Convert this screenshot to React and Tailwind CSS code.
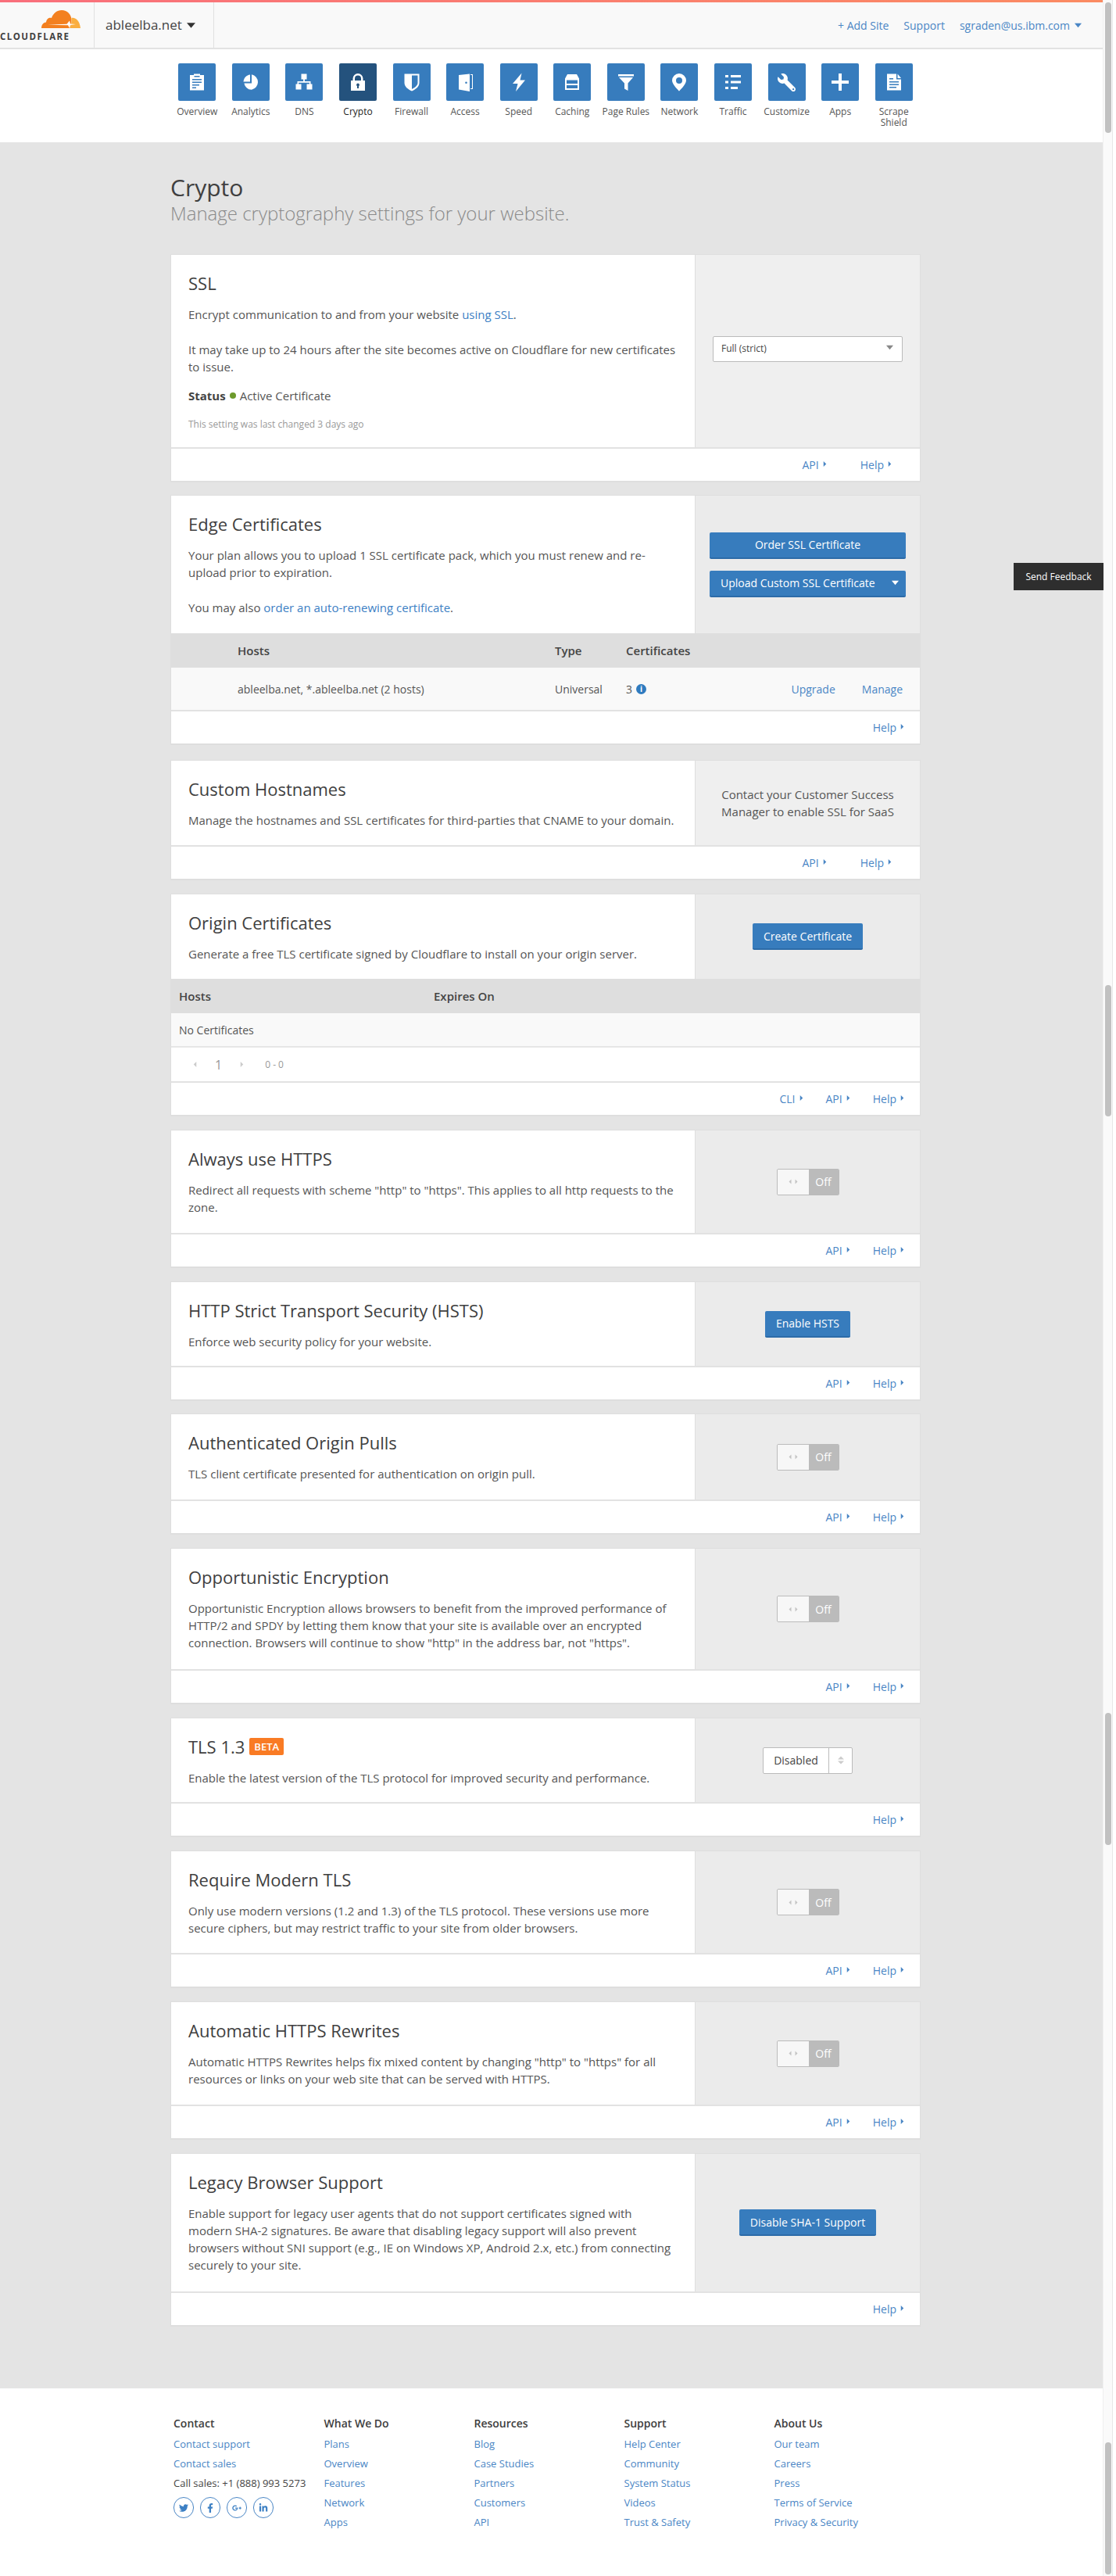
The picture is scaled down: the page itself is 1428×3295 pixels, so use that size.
import React from 'react';
import { FaWrench, FaTwitter, FaFacebookF, FaGooglePlusG, FaLinkedinIn } from 'react-icons/fa';

const Caret = ({ dir = 'right', className = '' }) => {
  const d = {
    right: 'M2 1l4 4-4 4z',
    left: 'M6 1L2 5l4 4z',
    down: 'M0 2h10L5 8z',
  }[dir];
  return (
    <svg viewBox={dir === 'down' ? '0 0 10 10' : '0 0 8 10'} className={`fill-current inline-block ${className}`}>
      <path d={d} />
    </svg>
  );
};

const Ico = ({ children }) => (
  <svg viewBox="0 0 24 24" className="w-6 h-6 fill-white" fillRule="evenodd">
    {children}
  </svg>
);

const navItems = [
  ['Overview', <Ico><path d="M3 3h5V1.5h8V3h5v19.5H3zM8.500 4v1.500h7V4zM6 8v1.600h12V8zM6 11.500v1.600h12v-1.600zM6 15v1.600h9V15zM6 18.500v1.600h5v-1.600z" /></Ico>],
  ['Analytics', <Ico><path d="M13 2.200a10 10 0 0 1 0 19.600c-5 0-8.700-3.800-9.500-8.300H13z" /><path d="M2.500 11.500C3 6.500 6.500 3 11 2.500v9z" /></Ico>],
  ['DNS', <Ico><path d="M8.500 1.500h7v7h-2.600v2.600h7.600v3.400h2v7h-7v-7h3.400v-1.800H5.100v1.800h3.400v7h-7v-7h2v-3.400h7.600V8.500H8.500z" /></Ico>],
  ['Crypto', <Ico><path d="M3 10h2.500V7.500a6.500 6.500 0 0 1 13 0V10H21v13H3zM8 10h8V7.500a4 4 0 0 0-8 0zM12 13.500a2 2 0 0 0-1 3.700V20h2v-2.800a2 2 0 0 0-1-3.700z" /></Ico>],
  ['Firewall', <Ico><path d="M2.500 1.500h19V13c0 5-5 8.500-9.500 10.500C7.500 21.500 2.500 18 2.500 13zM12 3.500V21c3.500-1.700 7.500-4.500 7.500-8V3.500z" /></Ico>],
  ['Access', <Ico><path d="M4 3l14-1.500V24L4 21.500zM13.500 11.500a1.300 1.300 0 1 0 0 2.600 1.300 1.300 0 0 0 0-2.600z" /><path d="M19 2h3v19h-3v-1h2V3h-2z" /></Ico>],
  ['Speed', <Ico><path d="M15.500.500L4 14h6.500L8 24l12-14.500h-6.500z" /></Ico>],
  ['Caching', <Ico><path d="M6 2h12l3 5.500V22H3V7.500zM5 9.500V14h14V9.500zM5 16v4h14v-4z" /></Ico>],
  ['Page Rules', <Ico><path d="M2 2h20v2.500H2zM3 6h18l-6.500 7.500V23L10 20.500v-7z" /></Ico>],
  ['Network', <Ico><path d="M12 1a9 9 0 0 0-9 9c0 5 9 13.500 9 13.500S21 15 21 10a9 9 0 0 0-9-9zM12 6a4 4 0 1 1 0 8 4 4 0 0 1 0-8z" /></Ico>],
  ['Traffic', <Ico><path d="M2 3h4v3H2zM9 3h13v3H9zM2 10.500h4v3H2zM9 10.500h13v3H9zM2 18h4v3H2zM9 18h9v3H9z" /></Ico>],
  ['Customize', <FaWrench className="w-[23px] h-[23px] text-white -scale-x-100" />],
  ['Apps', <Ico><path d="M10 1h4v9h9v4h-9v9h-4v-9H1v-4h9z" /></Ico>],
  ['Scrape Shield', <Ico><path d="M3 1.500h12v7h6v14H3zM16.500 1.500l4.500 5.500h-4.500zM6 11v1.600h12V11zM6 14.500v1.600h12v-1.600zM6 18v1.600h9V18zM6 7v1.600h5V7z" /></Ico>],
];

const Nav = () => (
  <div className="bg-white h-[119px] pt-[18px]">
    <div className="ml-[218px] w-[960px] grid grid-cols-[repeat(14,1fr)]">
      {navItems.map(([label, icon]) => {
        const active = label === 'Crypto';
        return (
          <div key={label} className="flex flex-col items-center">
            <div className={`w-12 h-12 rounded-[2px] flex items-center justify-center ${active ? 'bg-[#24527d]' : 'bg-[#377cbd]'}`}>
              {icon}
            </div>
            <div className={`mt-[7px] text-xs leading-[14px] text-center w-[66px] ${active ? 'text-[#222]' : 'text-[#555]'}`}>
              {label}
            </div>
          </div>
        );
      })}
    </div>
  </div>
);

const Logo = () => (
  <div className="w-[121px] h-full border-r border-[#e0e0e0] relative flex flex-col items-end pr-[17px] pt-[10px]">
    <svg viewBox="0 0 50 23" className="w-[50px] h-[23px] block">
      <path fill="#f38020" d="M0 23C0 19 2 16 6 15.500C6.500 11 10 9 13 10C15 4 20 0 26 0C33 0 38 5 38.500 12C38.500 15 38 19 36 23Z" />
      <path fill="#faae40" d="M36 23C38 19 39 15 38.500 10C44 9 49 14 50 23Z" />
      <path fill="#fff" d="M8 18.700L32.500 17.800L36 13.500L37 17.500L44 18L37 19L36 23L34 19.300Z" />
    </svg>
    <div className="absolute left-0 top-[38px] w-[104px] text-[11.5px] leading-[11px] font-bold text-[#404041] tracking-[1.45px] whitespace-nowrap">CLOUDFLARE</div>
  </div>
);

const Header = () => (
  <div>
    <div className="h-[3px] bg-gradient-to-r from-[#f96f7c] to-[#fb8b62]" />
    <div className="h-[60px] bg-[#f9f9f9] border-b-2 border-[#e2e2e2] flex items-center">
      <Logo />
      <div className="w-[153px] h-full border-r border-[#e0e0e0] pl-[14px] flex items-center text-[#444] text-[17px]">
        ableelba.net
        <Caret dir="down" className="w-[11px] h-[11px] ml-[6px] text-[#333]" />
      </div>
      <div className="ml-auto flex items-center pr-[27px] text-[14px] text-[#4a86c5]">
        <span>+ Add Site</span>
        <span className="ml-[19px]">Support</span>
        <span className="ml-[19px]">sgraden@us.ibm.com</span>
        <Caret dir="down" className="w-[9px] h-[9px] ml-[6px]" />
      </div>
    </div>
  </div>
);

const Btn = ({ children, className = '' }) => (
  <div className={`bg-[#377cbd] border-b-2 border-[#2c6ba8] rounded-[2px] h-[34px] flex items-center justify-center text-white text-[14px] ${className}`}>
    {children}
  </div>
);

const Toggle = () => (
  <div className="w-20 h-[34px] flex rounded-[2px] overflow-hidden border border-[#bbb]">
    <div className="w-10 bg-[#f7f7f7] flex items-center justify-center gap-[2px] text-[#c4c4c4]">
      <Caret dir="left" className="w-[6px] h-[9px]" />
      <Caret className="w-[6px] h-[9px]" />
    </div>
    <div className="flex-1 bg-[#bbb] text-white text-[14px] flex items-center justify-center">Off</div>
  </div>
);

const Links = ({ items, wide }) => (
  <div className={`h-[43px] flex items-center justify-end border-t-2 border-[#e2e2e2] text-[14px] text-[#4a86c5] ${wide ? 'pr-[35px] gap-[42px]' : 'pr-[19px] gap-[28px]'}`}>
    {items.map((l) => (
      <span key={l} className="flex items-center">
        {l}
        <Caret className="w-[7px] h-[9px] ml-[4px] -mt-[2px]" />
      </span>
    ))}
  </div>
);

const Card = ({ title, badge, children, side, table, links, wide, h, gap = 'mb-[17px]', panel = 'bg-[#ebebeb]' }) => (
  <div className={`bg-white border border-[#dedede] border-b-2 ${gap}`}>
    <div className={`flex ${h}`}>
      <div className="w-[670px] shrink-0 pt-[24px] pl-[22px] pr-[20px] text-[15px] leading-[22px] text-[#555]">
        <div className="text-[22px] leading-[24px] text-[#404040] mb-[17px] flex items-center">
          {title}
          {badge && (
            <span className="ml-[6px] bg-[#f97b24] text-white text-[13px] leading-[22px] font-semibold px-[6px] rounded-[2px]">BETA</span>
          )}
        </div>
        {children}
      </div>
      <div className={`flex-1 border-l border-[#dedede] flex flex-col items-center justify-center ${panel}`}>{side}</div>
    </div>
    {table}
    <Links items={links} wide={wide} />
  </div>
);

const Blue = ({ children }) => <span className="text-[#3d80c4]">{children}</span>;

const Cards = () => (
  <>
    <Card
      title="SSL"
      h="h-[246px]"
      gap="mb-[16px]"
      wide
      panel="bg-[#efefef]"
      links={['API', 'Help']}
      side={
        <div className="w-[243px] h-[33px] -mt-[6px] bg-white border border-[#bbb] rounded-[2px] flex items-center justify-between pl-[10px] pr-[11px] text-xs text-[#444]">
          Full (strict)
          <Caret dir="down" className="w-[9px] h-[9px] text-[#888] -mt-[3px]" />
        </div>
      }
    >
      <p>Encrypt communication to and from your website <Blue>using SSL</Blue>.</p>
      <p className="mt-[23px]">It may take up to 24 hours after the site becomes active on Cloudflare for new certificates to issue.</p>
      <p className="mt-[15px] flex items-center">
        <b className="font-bold text-[#444]">Status</b>
        <span className="w-[8px] h-[8px] rounded-full bg-[#6d9a2c] mx-[5px]" />
        Active Certificate
      </p>
      <p className="mt-[15px] text-[12px] text-[#999]">This setting was last changed 3 days ago</p>
    </Card>

    <Card
      title="Edge Certificates"
      h="h-[176px]"
      gap="mb-[19px]"
      links={['Help']}
      side={
        <div className="w-[251px] flex flex-col gap-[15px]">
          <Btn>Order SSL Certificate</Btn>
          <Btn className="!justify-between pl-[14px] pr-[9px]">
            Upload Custom SSL Certificate
            <Caret dir="down" className="w-[9px] h-[9px]" />
          </Btn>
        </div>
      }
      table={
        <div className="text-[14px] text-[#555]">
          <div className="grid grid-cols-[85px_406px_91px_1fr] h-[44px] items-center bg-[#dedede] font-semibold text-[15px] text-[#444]">
            <span />
            <span>Hosts</span>
            <span>Type</span>
            <span>Certificates</span>
          </div>
          <div className="grid grid-cols-[85px_406px_91px_1fr_auto] h-[54px] items-center bg-[#f9f9f9]">
            <span />
            <span>ableelba.net, *.ableelba.net (2 hosts)</span>
            <span>Universal</span>
            <span className="flex items-center gap-[5px]">
              3
              <span className="w-[13px] h-[13px] rounded-full bg-[#2f7bbf] text-white text-[10px] leading-[13px] font-bold text-center">i</span>
            </span>
            <span className="pr-[22px] flex gap-[34px] text-[#4a86c5]">
              <span>Upgrade</span>
              <span>Manage</span>
            </span>
          </div>
        </div>
      }
    >
      <p>Your plan allows you to upload 1 SSL certificate pack, which you must renew and re-upload prior to expiration.</p>
      <p className="mt-[23px]">You may also <Blue>order an auto-renewing certificate</Blue>.</p>
    </Card>

    <Card
      title="Custom Hostnames"
      h="h-[108px]"
      wide
      panel="bg-[#efefef]"
      links={['API', 'Help']}
      side={
        <div className="text-[15px] leading-[22px] text-[#555] text-center">
          Contact your Customer Success
          <br />
          Manager to enable SSL for SaaS
        </div>
      }
    >
      <p className="whitespace-nowrap">Manage the hostnames and SSL certificates for third-parties that CNAME to your domain.</p>
    </Card>

    <Card
      title="Origin Certificates"
      h="h-[108px]"
      links={['CLI', 'API', 'Help']}
      side={<Btn className="px-[14px]">Create Certificate</Btn>}
      table={
        <div className="text-[14px] text-[#555]">
          <div className="grid grid-cols-[326px_1fr] pl-[10px] h-[44px] items-center bg-[#dedede] font-semibold text-[15px] text-[#444]">
            <span>Hosts</span>
            <span>Expires On</span>
          </div>
          <div className="h-[42px] flex items-center pl-[10px] bg-[#f9f9f9]">No Certificates</div>
          <div className="h-[45px] flex items-center border-t-2 border-[#e6e6e6] pl-[27px] text-[#999]">
            <Caret dir="left" className="w-[7px] h-[9px] text-[#ccc]" />
            <span className="ml-[22px] text-[16px]">1</span>
            <Caret className="w-[7px] h-[9px] ml-[22px] text-[#ccc]" />
            <span className="ml-[26px] text-xs">0 - 0</span>
          </div>
        </div>
      }
    >
      <p>Generate a free TLS certificate signed by Cloudflare to install on your origin server.</p>
    </Card>

    <Card title="Always use HTTPS" h="h-[131px]" links={['API', 'Help']} side={<Toggle />}>
      <p>Redirect all requests with scheme "http" to "https". This applies to all http requests to the zone.</p>
    </Card>

    <Card title="HTTP Strict Transport Security (HSTS)" h="h-[107px]" gap="mb-[16px]" links={['API', 'Help']} side={<Btn className="px-[14px]">Enable HSTS</Btn>}>
      <p>Enforce web security policy for your website.</p>
    </Card>

    <Card title="Authenticated Origin Pulls" h="h-[109px]" links={['API', 'Help']} side={<Toggle />}>
      <p>TLS client certificate presented for authentication on origin pull.</p>
    </Card>

    <Card title="Opportunistic Encryption" h="h-[154px]" links={['API', 'Help']} side={<Toggle />}>
      <p>Opportunistic Encryption allows browsers to benefit from the improved performance of HTTP/2 and SPDY by letting them know that your site is available over an encrypted connection. Browsers will continue to show "http" in the address bar, not "https".</p>
    </Card>

    <Card
      title="TLS 1.3"
      badge
      h="h-[107px]"
      links={['Help']}
      side={
        <div className="w-[115px] h-[34px] flex bg-white border border-[#bbb] rounded-[2px] text-[14px] text-[#444]">
          <div className="w-[84px] border-r border-[#bbb] flex items-center justify-center">Disabled</div>
          <div className="flex-1 flex flex-col items-center justify-center gap-[1px] text-[#ccc]">
            <svg viewBox="0 0 10 5" className="w-[8px] h-[5px] fill-current"><path d="M5 0l5 5H0z" /></svg>
            <svg viewBox="0 0 10 5" className="w-[8px] h-[5px] fill-current"><path d="M0 0h10L5 5z" /></svg>
          </div>
        </div>
      }
    >
      <p>Enable the latest version of the TLS protocol for improved security and performance.</p>
    </Card>

    <Card title="Require Modern TLS" h="h-[130px]" links={['API', 'Help']} side={<Toggle />}>
      <p>Only use modern versions (1.2 and 1.3) of the TLS protocol. These versions use more secure ciphers, but may restrict traffic to your site from older browsers.</p>
    </Card>

    <Card title="Automatic HTTPS Rewrites" h="h-[131px]" links={['API', 'Help']} side={<Toggle />}>
      <p>Automatic HTTPS Rewrites helps fix mixed content by changing "http" to "https" for all resources or links on your web site that can be served with HTTPS.</p>
    </Card>

    <Card title="Legacy Browser Support" h="h-[176px]" links={['Help']} side={<Btn className="px-[14px]">Disable SHA-1 Support</Btn>}>
      <p className="pr-[8px]">Enable support for legacy user agents that do not support certificates signed with modern SHA-2 signatures. Be aware that disabling legacy support will also prevent browsers without SNI support (e.g., IE on Windows XP, Android 2.x, etc.) from connecting securely to your site.</p>
    </Card>
  </>
);

const footerCols = [
  ['What We Do', ['Plans', 'Overview', 'Features', 'Network', 'Apps']],
  ['Resources', ['Blog', 'Case Studies', 'Partners', 'Customers', 'API']],
  ['Support', ['Help Center', 'Community', 'System Status', 'Videos', 'Trust & Safety']],
  ['About Us', ['Our team', 'Careers', 'Press', 'Terms of Service', 'Privacy & Security']],
];

const Footer = () => (
  <div className="bg-white h-[240px] pt-[34px] pl-[222px] flex text-[13px] leading-[25px] text-[#4a86c5]">
    <div className="w-[192.500px]">
      <div className="text-[14px] font-semibold text-[#404040] mb-[3px] leading-[22px]">Contact</div>
      <div>Contact support</div>
      <div>Contact sales</div>
      <div className="text-[#444] whitespace-nowrap">Call sales: +1 (888) 993 5273</div>
      <div className="flex gap-[8px] mt-[5px]">
        {[FaTwitter, FaFacebookF, FaGooglePlusG, FaLinkedinIn].map((I, i) => (
          <span key={i} className="w-[26px] h-[27px] rounded-full border border-[#4a86c5] flex items-center justify-center">
            <I className="w-[12px] h-[12px] text-[#3d80c4]" />
          </span>
        ))}
      </div>
    </div>
    {footerCols.map(([head, items]) => (
      <div key={head} className="w-[192px]">
        <div className="text-[14px] font-semibold text-[#404040] mb-[3px] leading-[22px]">{head}</div>
        {items.map((t) => (
          <div key={t}>{t}</div>
        ))}
      </div>
    ))}
  </div>
);

const Scrollbar = () => (
  <div className="w-[13px] h-[3295px] relative bg-[#fafafa] border-r border-[#e8e8e8] border-l border-l-[#f0f0f0]">
    {/* the capture was stitched, so the thumb shows up four times */}
    <div className="absolute left-[2px] top-[3px] w-[8px] h-[167px] rounded-[4px] bg-[#c1c1c1]" />
    <div className="absolute left-[2px] top-[1260px] w-[8px] h-[168px] rounded-[4px] bg-[#c1c1c1]" />
    <div className="absolute left-[2px] top-[2191px] w-[8px] h-[169px] rounded-[4px] bg-[#c1c1c1]" />
    <div className="absolute left-[2px] top-[3124px] w-[8px] h-[169px] rounded-[4px] bg-[#c1c1c1]" />
  </div>
);

export default function App() {
  return (
    <div className="w-[1428px] flex bg-white font-['Open_Sans',sans-serif] relative">
      <div className="w-[1411px] shrink-0">
        <Header />
        <Nav />
        <div className="bg-[#e4e4e4] h-[2873px] pl-[218px]">
          <div className="h-[143px] pt-[40px]">
            <h1 className="text-[30px] leading-[36px] text-[#404040]">Crypto</h1>
            <p className="text-[24px] leading-[30px] font-light text-[#8a8a8a]">Manage cryptography settings for your website.</p>
          </div>
          <div className="w-[960px]">
            <Cards />
          </div>
        </div>
        <Footer />
      </div>
      <Scrollbar />
      <div className="absolute left-[1297px] top-[720px] w-[115px] h-[35px] bg-[#2e2e2e] text-white text-xs flex items-center justify-center">
        Send Feedback
      </div>
    </div>
  );
}
